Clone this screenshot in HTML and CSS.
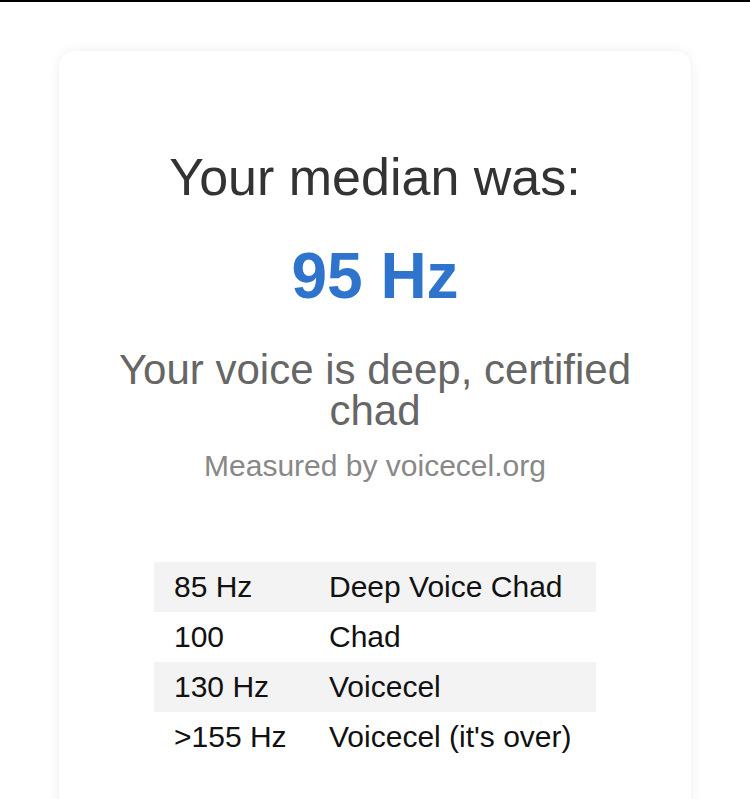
FILE: index.html
```html
<!DOCTYPE html>
<html lang="en">
<head>
<meta charset="utf-8">
<title>Voicecel result</title>
<link rel="stylesheet" href="styles.css">
</head>
<body>
<div class="topbar"></div>
<main class="card">
  <h1 class="title">Your median was:</h1>
  <div class="value">95 Hz</div>
  <p class="verdict">Your voice is deep, certified chad</p>
  <p class="credit">Measured by voicecel.org</p>
  <table class="scale">
    <colgroup><col class="col-hz"><col class="col-label"></colgroup>
    <tr class="shade"><td>85 Hz</td><td>Deep Voice Chad</td></tr>
    <tr><td>100</td><td>Chad</td></tr>
    <tr class="shade"><td>130 Hz</td><td>Voicecel</td></tr>
    <tr><td>&gt;155 Hz</td><td>Voicecel (it's over)</td></tr>
  </table>
</main>
</body>
</html>
```
FILE: styles.css
```css
html, body {
  margin: 0;
  padding: 0;
  background: #ffffff;
  font-family: "Liberation Sans", Arial, Helvetica, sans-serif;
}
.topbar {
  height: 2px;
  background: #000000;
}
.card {
  width: 632px;
  margin: 49px auto 0;
  box-sizing: border-box;
  padding: 97px 0 120px;
  background: #ffffff;
  border-radius: 16px;
  box-shadow: 0 0 12px rgba(0, 0, 0, 0.07);
  display: flex;
  flex-direction: column;
  align-items: center;
  text-align: center;
}
.title {
  margin: 0;
  font-size: 52px;
  line-height: 58px;
  font-weight: normal;
  color: #333333;
}
.value {
  margin-top: 33px;
  font-size: 64px;
  line-height: 74px;
  font-weight: bold;
  color: #2e73cc;
}
.verdict {
  margin: 36px 0 0;
  width: 560px;
  font-size: 42px;
  line-height: 41px;
  color: #666666;
}
.credit {
  margin: 17px 0 0;
  font-size: 30px;
  line-height: 35px;
  color: #888888;
}
.scale {
  margin-top: 79px;
  width: 442px;
  table-layout: fixed;
  border-collapse: collapse;
  text-align: left;
  font-size: 30px;
  color: #111111;
}
.col-hz {
  width: 155px;
}
.scale td {
  padding: 8px 0 8px 20px;
  line-height: 34px;
  white-space: nowrap;
}
.shade {
  background: #f3f3f3;
}
```
